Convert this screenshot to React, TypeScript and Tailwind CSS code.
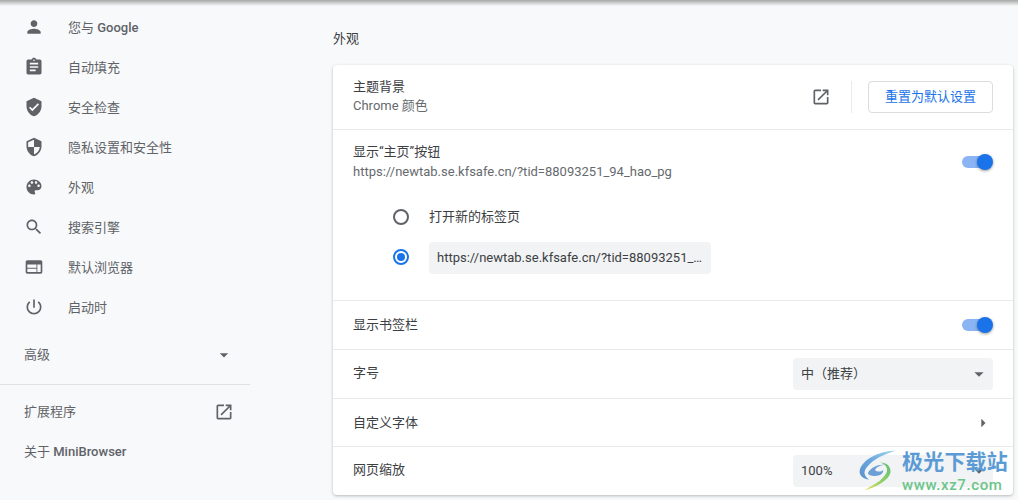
import React from "react";

const paths = {
  person: "M12 12c2.21 0 4-1.79 4-4s-1.79-4-4-4-4 1.79-4 4 1.79 4 4 4zm0 2c-2.67 0-8 1.34-8 4v2h16v-2c0-2.66-5.33-4-8-4z",
  assignment: "M19 3h-4.18C14.4 1.84 13.3 1 12 1c-1.3 0-2.4.84-2.82 2H5c-1.1 0-2 .9-2 2v14c0 1.1.9 2 2 2h14c1.1 0 2-.9 2-2V5c0-1.1-.9-2-2-2zm-7 0c.55 0 1 .45 1 1s-.45 1-1 1-1-.45-1-1 .45-1 1-1zm2 14H7v-2h7v2zm3-4H7v-2h10v2zm0-4H7V7h10v2z",
  verified: "M12 1L3 5v6c0 5.55 3.84 10.74 9 12 5.16-1.26 9-6.45 9-12V5l-9-4zm-2 16l-4-4 1.41-1.41L10 14.17l6.59-6.59L18 9l-8 8z",
  security: "M12 1L3 5v6c0 5.55 3.84 10.74 9 12 5.16-1.26 9-6.45 9-12V5l-9-4zm0 10.99h7c-.53 4.12-3.28 7.79-7 8.94V12H5V6.3l7-3.11v8.8z",
  palette: "M12 3c-4.97 0-9 4.03-9 9s4.03 9 9 9c.83 0 1.5-.67 1.5-1.5 0-.39-.15-.74-.39-1.01-.23-.26-.38-.61-.38-.99 0-.83.67-1.5 1.5-1.5H16c2.76 0 5-2.24 5-5 0-4.42-4.03-8-9-8zm-5.5 9c-.83 0-1.5-.67-1.5-1.5S5.67 9 6.5 9 8 9.67 8 10.5 7.33 12 6.5 12zm3-4C8.67 8 8 7.33 8 6.5S8.67 5 9.5 5s1.5.67 1.5 1.5S10.33 8 9.5 8zm5 0c-.83 0-1.5-.67-1.5-1.5S13.67 5 14.5 5s1.5.67 1.5 1.5S15.33 8 14.5 8zm3 4c-.83 0-1.5-.67-1.5-1.5S16.67 9 17.5 9s1.5.67 1.5 1.5-.67 1.5-1.5 1.5z",
  search: "M15.5 14h-.79l-.28-.27C15.41 12.59 16 11.11 16 9.5 16 5.91 13.09 3 9.5 3S3 5.91 3 9.5 5.91 16 9.5 16c1.61 0 3.09-.59 4.23-1.57l.27.28v.79l5 4.99L20.49 19l-4.99-5zm-6 0C7.01 14 5 11.99 5 9.5S7.01 5 9.5 5 14 7.01 14 9.5 11.99 14 9.5 14z",
  web: "M20 4H4c-1.1 0-1.99.9-1.99 2L2 18c0 1.1.9 2 2 2h16c1.1 0 2-.9 2-2V6c0-1.1-.9-2-2-2zm-5 14H4v-4h11v4zm0-5H4V9h11v4zm5 5h-4V9h4v9z",
  power: "M13 3h-2v10h2V3zm4.83 2.17l-1.42 1.42C17.99 7.86 19 9.81 19 12c0 3.87-3.13 7-7 7s-7-3.13-7-7c0-2.19 1.01-4.14 2.58-5.42L6.17 5.17C4.23 6.82 3 9.26 3 12c0 4.97 4.03 9 9 9s9-4.03 9-9c0-2.74-1.23-5.18-3.17-6.83z",
  open: "M19 19H5V5h7V3H5c-1.11 0-2 .9-2 2v14c0 1.1.89 2 2 2h14c1.1 0 2-.9 2-2v-7h-2v7zM14 3v2h3.59l-9.83 9.83 1.41 1.41L19 6.41V10h2V3h-7z",
  down: "M7 10l5 5 5-5z",
  right: "M10 17l5-5-5-5v10z",
};

function Icon({ d, className = "w-5 h-5" }: { d: string; className?: string }) {
  return (
    <svg viewBox="0 0 24 24" className={`${className} shrink-0 fill-[#5f6368]`}>
      <path d={d} />
    </svg>
  );
}

const menu = [
  { icon: paths.person, cjk: "您与", latin: " Google" },
  { icon: paths.assignment, cjk: "自动填充" },
  { icon: paths.verified, cjk: "安全检查" },
  { icon: paths.security, cjk: "隐私设置和安全性" },
  { icon: paths.palette, cjk: "外观" },
  { icon: paths.search, cjk: "搜索引擎" },
  { icon: paths.web, cjk: "默认浏览器" },
  { icon: paths.power, cjk: "启动时" },
];

function Toggle() {
  return (
    <div className="relative w-[31px] h-4 flex items-center">
      <div className="w-[28px] h-3 rounded-full bg-[#8ab4f4]" />
      <div className="absolute right-0 top-0 w-4 h-4 rounded-full bg-[#1a73e8] shadow-[0_1px_3px_rgba(0,0,0,0.4)]" />
    </div>
  );
}

function Select({ label }: { label: string }) {
  return (
    <div className="w-[200px] h-8 rounded bg-[#f1f3f4] flex items-center justify-between pl-2 pr-[3px] text-[#3c4043]">
      <span>{label}</span>
      <Icon d={paths.down} className="w-[22px] h-[22px]" />
    </div>
  );
}

export default function App() {
  return (
    <div className="relative w-[1018px] h-[500px] overflow-hidden bg-[#f8f9fa] flex text-[13px] font-['Roboto','Noto_Sans_CJK_SC',sans-serif] text-[#3c4043]">
      {/* toolbar shadow */}
      <div className="absolute top-0 left-0 right-0 h-[6px] bg-gradient-to-b from-[#a8a8a8] to-[#f8f9fa]" />

      {/* Sidebar */}
      <div className="w-[250px] shrink-0 pt-[7px] text-[#5f6368]">
        {menu.map((item) => (
          <div key={item.cjk} className="h-10 flex items-center pl-6">
            <Icon d={item.icon} />
            <span className="ml-6 mt-[2px]">
              {item.cjk}
              {item.latin && <span className="font-medium">{item.latin}</span>}
            </span>
          </div>
        ))}
        <div className="h-10 mt-2 flex items-center justify-between pl-6 pr-4">
          <span>高级</span>
          <Icon d={paths.down} />
        </div>
        <div className="h-px bg-[#e0e1e3] mt-[9px] mb-[7px]" />
        <div className="h-10 flex items-center justify-between pl-6 pr-4">
          <span>扩展程序</span>
          <Icon d={paths.open} />
        </div>
        <div className="h-10 flex items-center pl-6">
          关于<span className="font-medium">&nbsp;MiniBrowser</span>
        </div>
      </div>

      {/* Main */}
      <div className="ml-[83px] w-[680px]">
        <div className="h-[65px] pt-[30px] leading-[18px]">外观</div>
        <div className="w-[680px] h-[430px] bg-white rounded shadow-[0_1px_3px_rgba(60,64,67,0.35)]">
          <div className="h-[65px] px-5 flex items-center justify-between border-b border-[#e8eaed]">
            <div className="leading-[19px] mb-[2px]">
              <div>主题背景</div>
              <div className="text-[#666a6e]">Chrome 颜色</div>
            </div>
            <div className="flex items-center">
              <Icon d={paths.open} />
              <div className="w-px h-8 bg-[#e8eaed] ml-5 mr-4" />
              <div className="w-[125px] h-8 rounded border border-[#dadce0] flex items-center justify-center text-[#1a73e8]">
                重置为默认设置
              </div>
            </div>
          </div>

          <div className="h-[171px] border-b border-[#e8eaed]">
            <div className="h-[67px] px-5 pt-[12px] flex justify-between items-start">
              <div className="leading-[20px]">
                <div>显示“主页”按钮</div>
                <div className="text-[#666a6e]">https://newtab.se.kfsafe.cn/?tid=88093251_94_hao_pg</div>
              </div>
              <div className="mt-[12px]">
                <Toggle />
              </div>
            </div>
            <div className="h-10 pl-[60px] flex items-center">
              <div className="w-4 h-4 rounded-full border-2 border-[#5f6368]" />
              <span className="ml-5">打开新的标签页</span>
            </div>
            <div className="h-10 pl-[60px] flex items-center">
              <div className="w-4 h-4 rounded-full border-2 border-[#1a73e8] flex items-center justify-center">
                <div className="w-2 h-2 rounded-full bg-[#1a73e8]" />
              </div>
              <div className="ml-5 mt-[2px] w-[282px] h-8 rounded bg-[#f1f3f4] px-2 leading-8 whitespace-nowrap">
                https://newtab.se.kfsafe.cn/?tid=88093251_…
              </div>
            </div>
          </div>

          <div className="h-[49px] px-5 flex items-center justify-between border-b border-[#e8eaed]">
            <span>显示书签栏</span>
            <Toggle />
          </div>
          <div className="h-[49px] px-5 flex items-center justify-between border-b border-[#e8eaed]">
            <span className="mb-[2px]">字号</span>
            <Select label="中（推荐）" />
          </div>
          <div className="h-[48px] px-5 flex items-center justify-between border-b border-[#e8eaed]">
            <span>自定义字体</span>
            <Icon d={paths.right} className="w-5 h-5" />
          </div>
          <div className="h-[48px] px-5 flex items-center justify-between">
            <span className="mb-[2px]">网页缩放</span>
            <Select label="100%" />
          </div>
        </div>
      </div>

      {/* Watermark */}
      <div className="absolute left-[855px] top-[445px] w-[163px] h-[50px]">
        <svg viewBox="0 0 60 50" className="absolute left-0 top-0 w-[60px] h-[50px]">
          <defs>
            <linearGradient id="sweep" x1="1" y1="0" x2="0" y2="1">
              <stop offset="0" stopColor="#a5dcee" />
              <stop offset="0.5" stopColor="#69a7df" />
              <stop offset="1" stopColor="#5c92cc" />
            </linearGradient>
            <linearGradient id="tail" x1="1" y1="0" x2="0" y2="1">
              <stop offset="0" stopColor="#5fc07c" />
              <stop offset="0.6" stopColor="#9dd263" />
              <stop offset="1" stopColor="#f0e05a" />
            </linearGradient>
          </defs>
          <path d="M41 5.5C27 6 10 12 5 24c-2 6 3 10 9 10.5C9 31 8 27 12 22 18 14 30 9 41 5.5z" fill="url(#sweep)" />
          <path d="M13 28c3-6 11-9 17-8-4 0-9 2-10 5 2 2 6 2 8 0 1 3-3 6-8 6-4 0-7-1-7-3z" fill="#6c9fd6" />
          <path d="M25 17.5c7 0 11 4 10.5 10C34 35 22 42 9 45.5c8-5 15-8 18.5-12.5 3-3 5-6 4.5-9-.5-3-3-5.5-7-6.5z" fill="url(#tail)" />
        </svg>
        <div className="absolute left-[47px] top-[4px] text-[21px] leading-[26px] font-bold tracking-[0.2px] text-[#5b9bd5] whitespace-nowrap">
          极光下载站
        </div>
        <div className="absolute left-[47px] top-[31px] text-[15px] leading-[18px] font-medium tracking-[0.6px] text-[#6cc58a] whitespace-nowrap">
          www.xz7.com
        </div>
      </div>
    </div>
  );
}
